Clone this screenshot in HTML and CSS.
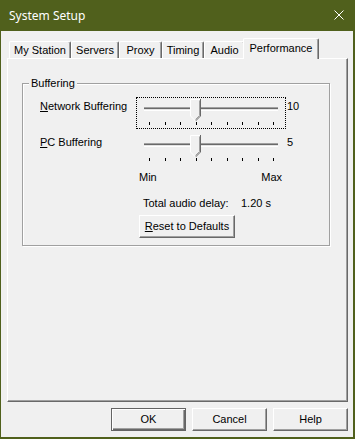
FILE: index.html
```html
<!DOCTYPE html>
<html>

<head>
    <title>System Setup</title>
    <link rel="stylesheet" href="styles.css">
</head>

<body>
    <div class="window">
        <div class="titlebar">
            <span class="title">System Setup</span>
            <svg class="close" width="10" height="10" viewBox="0 0 10 10">
                <path d="M0.5 0.5 L9.5 9.5 M9.5 0.5 L0.5 9.5" stroke="#fff" stroke-width="1" fill="none" />
            </svg>
        </div>

        <div class="client">
            <div class="tabs">
                <div class="tab tab-station">My Station</div>
                <div class="tab tab-servers">Servers</div>
                <div class="tab tab-proxy">Proxy</div>
                <div class="tab tab-timing">Timing</div>
                <div class="tab tab-audio">Audio</div>
                <div class="tab tab-performance active">Performance</div>
            </div>

            <div class="tab-panel">
                <div class="groupbox">
                    <div class="group-title">Buffering</div>

                    <div class="slider-row">
                        <div class="slider-label"><u>N</u>etwork Buffering</div>
                        <div class="slider focused">
                            <div class="track"></div>
                            <svg class="thumb" width="11" height="23" viewBox="0 0 11 23">
                                <polygon points="0,0 11,0 11,17 5.5,22.5 0,17" fill="#f0f0f0" />
                                <polyline points="0.5,17 0.5,0.5 10,0.5" stroke="#fff" fill="none" />
                                <polyline points="10.5,0 10.5,17 5.5,22" stroke="#696969" fill="none" />
                                <polyline points="9.5,1.5 9.5,16.5 5.5,20.5" stroke="#a0a0a0" fill="none" />
                                <polyline points="0.5,17 5.5,22" stroke="#fff" fill="none" />
                            </svg>
                            <div class="ticks">
                                <span></span><span></span><span></span><span></span><span></span>
                                <span></span><span></span><span></span><span></span>
                            </div>
                        </div>
                        <div class="slider-value">10</div>
                    </div>

                    <div class="slider-row second">
                        <div class="slider-label"><u>P</u>C Buffering</div>
                        <div class="slider">
                            <div class="track"></div>
                            <svg class="thumb" width="11" height="23" viewBox="0 0 11 23">
                                <polygon points="0,0 11,0 11,17 5.5,22.5 0,17" fill="#f0f0f0" />
                                <polyline points="0.5,17 0.5,0.5 10,0.5" stroke="#fff" fill="none" />
                                <polyline points="10.5,0 10.5,17 5.5,22" stroke="#696969" fill="none" />
                                <polyline points="9.5,1.5 9.5,16.5 5.5,20.5" stroke="#a0a0a0" fill="none" />
                                <polyline points="0.5,17 5.5,22" stroke="#fff" fill="none" />
                            </svg>
                            <div class="ticks">
                                <span></span><span></span><span></span><span></span><span></span>
                                <span></span><span></span><span></span><span></span>
                            </div>
                        </div>
                        <div class="slider-value">5</div>
                    </div>

                    <div class="scale-labels">
                        <span>Min</span>
                        <span>Max</span>
                    </div>

                    <div class="delay-row">
                        <div class="delay-label">Total audio delay:</div>
                        <div class="delay-value">1.20 s</div>
                    </div>

                    <div class="button reset-button"><u>R</u>eset to Defaults</div>
                </div>
            </div>

            <div class="dialog-buttons">
                <div class="button default">OK</div>
                <div class="button">Cancel</div>
                <div class="button">Help</div>
            </div>
        </div>
    </div>
</body>

</html>
```

FILE: styles.css
```css
body {
    margin: 0;
    padding: 0;
    font-family: "Liberation Sans", Arial, sans-serif;
    font-size: 11px;
    line-height: 13px;
    color: #000;
    background-color: #f0f0f0;
}

.window {
    width: 355px;
    height: 439px;
    box-sizing: border-box;
    border-left: 1px solid #50601c;
    border-right: 2px solid #50601c;
    border-bottom: 2px solid #50601c;
    background-color: #f0f0f0;
}

.titlebar {
    height: 31px;
    display: flex;
    align-items: center;
    justify-content: space-between;
    padding: 0 9px 0 8px;
    background-color: #50601c;
}

.title {
    font-family: "Noto Sans", sans-serif;
    font-size: 12px;
    color: #fff;
    margin-top: -1px;
}

.close {
    display: block;
    margin-top: -2px;
}

.client {
    padding: 0 5px 0 6px;
}

/* tabs */

.tabs {
    display: flex;
    align-items: flex-end;
    height: 20px;
    margin-top: 7px;
    padding-left: 2px;
    position: relative;
    z-index: 1;
}

.tab {
    height: 17px;
    box-sizing: border-box;
    padding-top: 2px;
    text-align: center;
    border-top: 1px solid #fff;
    border-left: 1px solid #fff;
    border-right: 1px solid #696969;
    box-shadow: inset -1px 0 #a0a0a0;
    border-radius: 2px 2px 0 0;
    background-color: #f0f0f0;
}

.tab-station { width: 62px; }
.tab-servers { width: 48px; }
.tab-proxy { width: 43px; }
.tab-timing { width: 42px; }
.tab-audio { width: 41px; }

.tab.active {
    width: 76px;
    height: 21px;
    margin: 0 -2px -1px -2px;
    padding-top: 3px;
    position: relative;
    z-index: 2;
}

.tab-panel {
    width: 341px;
    height: 344px;
    box-sizing: border-box;
    border-top: 1px solid #fff;
    border-left: 1px solid #fff;
    border-right: 1px solid #696969;
    border-bottom: 1px solid #696969;
    box-shadow: inset -1px -1px #a0a0a0;
    padding-top: 1px;
}

/* group box */

.groupbox {
    width: 308px;
    height: 163px;
    box-sizing: border-box;
    margin: 23px 0 0 14px;
    padding-left: 17px;
    border: 1px solid #a0a0a0;
    box-shadow: inset 1px 1px #fff, 1px 1px #fff;
}

.group-title {
    width: max-content;
    margin: -7px 0 0 -11px;
    padding: 0 2px;
    background-color: #f0f0f0;
}

.slider-row {
    display: flex;
    margin-top: 7px;
}

.slider-row.second {
    margin-top: 4px;
}

.slider-label {
    width: 96px;
    padding-top: 3px;
}

.slider {
    position: relative;
    width: 150px;
    height: 32px;
    box-sizing: border-box;
    border: 1px dotted transparent;
}

.slider.focused {
    border-color: #000;
}

.track {
    width: 134px;
    height: 4px;
    margin: 9px 0 0 7px;
    background: linear-gradient(#a0a0a0 0 1px, #696969 1px 2px, #e3e3e3 2px 3px, #fff 3px 4px);
}

.thumb {
    position: absolute;
    left: 53px;
    top: 1px;
}

.ticks {
    display: flex;
    justify-content: space-between;
    width: 125px;
    margin: 11px 0 0 12px;
}

.ticks span {
    width: 1px;
    height: 3px;
    background-color: #000;
}

.slider-value {
    padding: 3px 0 0 1px;
}

.scale-labels {
    display: flex;
    justify-content: space-between;
    width: 143px;
    margin: 6px 0 0 99px;
}

.delay-row {
    display: flex;
    margin: 13px 0 0 103px;
}

.delay-label {
    width: 98px;
}

/* buttons */

.button {
    width: 75px;
    height: 23px;
    box-sizing: border-box;
    display: flex;
    align-items: center;
    justify-content: center;
    border: 1px solid;
    border-color: #fff #696969 #696969 #fff;
    box-shadow: inset -1px -1px #a0a0a0;
    background-color: #f0f0f0;
}

.button.default {
    border-color: #646464;
    box-shadow: inset 1px 1px #fff, inset -1px -1px #696969, inset -2px -2px #a0a0a0;
}

.reset-button {
    width: 96px;
    margin: 5px 0 0 99px;
}

.dialog-buttons {
    display: flex;
    justify-content: flex-end;
    gap: 6px;
    margin-top: 6px;
}
```
